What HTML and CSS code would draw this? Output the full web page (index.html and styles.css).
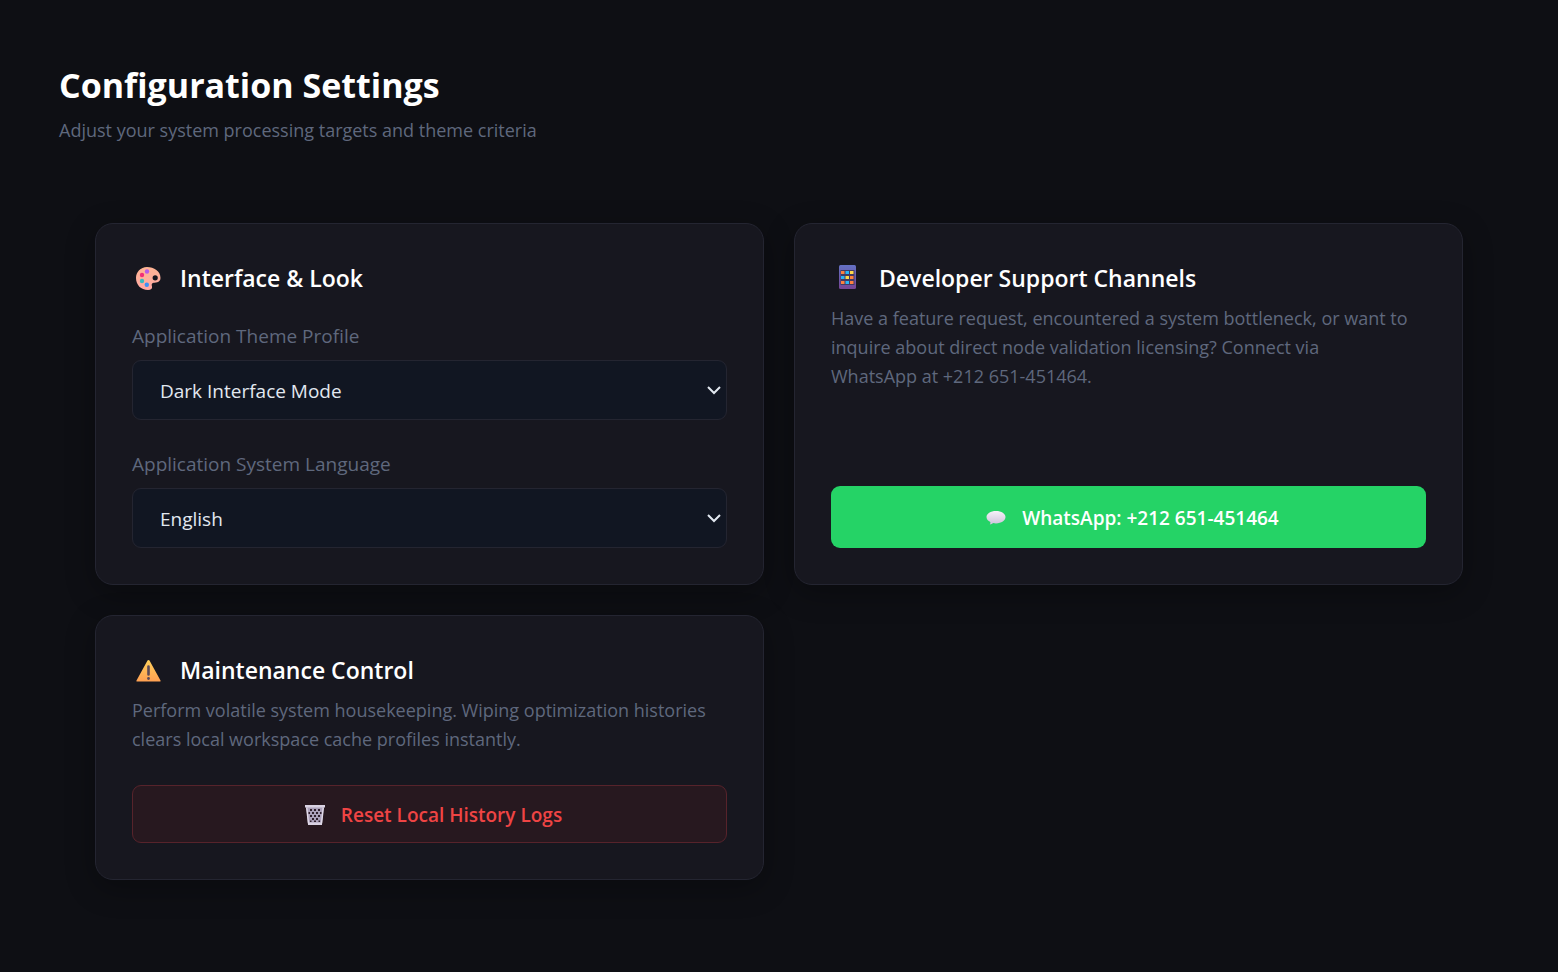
FILE: index.html
```html
<!DOCTYPE html>
<html lang="en">
<head>
    <meta charset="UTF-8">
    <meta name="viewport" content="width=device-width, initial-scale=1.0">
    <title>Configuration Settings</title>
    <link rel="stylesheet" href="styles.css">
</head>
<body>
    <header class="page-header">
        <h1>Configuration Settings</h1>
        <p>Adjust your system processing targets and theme criteria</p>
    </header>

    <main class="settings-grid">
        <section class="card">
            <h2 class="card-title">
                <svg class="icon" viewBox="0 0 32 32" aria-hidden="true">
                    <defs>
                        <linearGradient id="paletteFill" x1="0" y1="0" x2="0" y2="1">
                            <stop offset="0" stop-color="#ffb493"/>
                            <stop offset="1" stop-color="#ffa9a4"/>
                        </linearGradient>
                    </defs>
                    <path fill="url(#paletteFill)" fill-rule="evenodd" d="M15 5C8.500 5 4 10 4 16c0 7 5 12 12 12 3 0 4.500-1.500 4-3.500-.4-1.600-.6-3 1-3.500 1.500-.4 7.500 0 7.500-5C28.500 9 22 5 15 5zm8.200 8.200a2.600 2.600 0 1 1 0 5.200 2.600 2.600 0 0 1 0-5.200z"/>
                    <circle cx="15" cy="9.500" r="2.200" fill="#b75bea"/>
                    <circle cx="10" cy="13" r="2.200" fill="#f22f78"/>
                    <circle cx="10" cy="19" r="2.200" fill="#38bcc0"/>
                    <circle cx="14.800" cy="22.800" r="2.200" fill="#3c91f5"/>
                </svg>
                Interface &amp; Look
            </h2>
            <div class="fields">
                <div class="field">
                    <label for="theme">Application Theme Profile</label>
                    <select id="theme">
                        <option value="dark">Dark Interface Mode</option>
                        <option value="light">Light Interface Mode</option>
                    </select>
                </div>
                <div class="field">
                    <label for="language">Application System Language</label>
                    <select id="language">
                        <option value="en">English</option>
                        <option value="fr">Français</option>
                    </select>
                </div>
            </div>
        </section>

        <section class="card">
            <h2 class="card-title">
                <svg class="icon" viewBox="0 0 32 32" aria-hidden="true">
                    <defs>
                        <linearGradient id="phoneFill" x1="0" y1="0" x2="0" y2="1">
                            <stop offset="0" stop-color="#6471c4"/>
                            <stop offset="1" stop-color="#764594"/>
                        </linearGradient>
                    </defs>
                    <rect x="8" y="3" width="17" height="24" rx="1.500" fill="url(#phoneFill)"/>
                    <path fill="#423b62" d="M9.500 8h14v15h-14z"/>
                    <path fill="#ff823d" d="M10 9h3.500v3H10zM19 14h3.500v3H19zM10 19h3.500v3H10zM19 19h3.500v3H19z"/>
                    <path fill="#29b6f6" d="M14.500 9H18v3h-3.500zM10 14h3.500v3H10zM14.500 19H18v3h-3.500z"/>
                    <path fill="#ffd94a" d="M19 9h3.500v3H19zM14.500 14H18v3h-3.500z"/>
                </svg>
                Developer Support Channels
            </h2>
            <p class="card-text">Have a feature request, encountered a system bottleneck, or want to inquire about direct node validation licensing? Connect via<br>WhatsApp at +212 651-451464.</p>
            <a class="btn btn-whatsapp" href="https://wa.me/212651451464">
                <svg class="btn-icon" viewBox="2 2 20 20" aria-hidden="true">
                    <defs>
                        <linearGradient id="bubbleFill" x1="0" y1="0" x2="0" y2="1">
                            <stop offset="0" stop-color="#f5f1f8"/>
                            <stop offset="1" stop-color="#cdc2da"/>
                        </linearGradient>
                    </defs>
                    <path fill="url(#bubbleFill)" d="M12 5c5.500 0 9.500 2.600 9.500 6.100s-4 6.300-9.500 6.300c-1 0-2-.1-2.900-.3-.8.900-2 1.400-3.300 1.500.5-.7.700-1.600.6-2.500-2.400-1.100-3.900-2.900-3.900-5C2.500 7.600 6.500 5 12 5z"/>
                </svg>
                WhatsApp: +212 651-451464
            </a>
        </section>

        <section class="card">
            <h2 class="card-title">
                <svg class="icon" viewBox="0 0 32 32" aria-hidden="true">
                    <defs>
                        <linearGradient id="warnFill" x1="0" y1="0" x2="0" y2="1">
                            <stop offset="0" stop-color="#ffd05b"/>
                            <stop offset="1" stop-color="#ffa052"/>
                        </linearGradient>
                    </defs>
                    <path fill="url(#warnFill)" d="M16.500 6c.5 0 .8.200 1 .600l11 19.900c.3.600 0 1-.6 1H5.100c-.6 0-.9-.4-.6-1l11-19.900c.2-.4.5-.6 1-.6z"/>
                    <path fill="#5c4a57" d="M15.200 12.500a1.300 1.300 0 0 1 2.600 0v8a1.300 1.300 0 0 1-2.600 0z"/>
                    <circle cx="16.500" cy="24.500" r="1.400" fill="#5c4a57"/>
                </svg>
                Maintenance Control
            </h2>
            <p class="card-text">Perform volatile system housekeeping. Wiping optimization histories clears local workspace cache profiles instantly.</p>
            <button class="btn btn-danger" type="button">
                <svg class="btn-icon" viewBox="2 2 20 20" aria-hidden="true">
                    <path fill="#aaa0b9" d="M3.300 4h17.400l-1.900 18H5.200z"/>
                    <path fill="#d9d2e2" d="M2 2h20v2.500H2zM5 19.500h14V22H5z"/>
                    <path fill="none" stroke="#e0d9e8" stroke-width="1.500" d="M3.700 4.500l1.800 16M20.300 4.500l-1.800 16"/>
                    <path fill="#30202d" d="M7 6h2v2H7zM11 6h2v2h-2zM15 6h2v2h-2zM9 9h2v2H9zM13 9h2v2h-2zM17 9h1.500v2H17zM5.500 9H7v2H5.500zM7 12h2v2H7zM11 12h2v2h-2zM15 12h2v2h-2zM9 15h2v2H9zM13 15h2v2h-2zM7 17.500h1.500V19H7zM11 17.500h2V19h-2zM15.500 17.500H17V19h-1.500z"/>
                </svg>
                Reset Local History Logs
            </button>
        </section>
    </main>
</body>
</html>
```
FILE: styles.css
```css
* {
    box-sizing: border-box;
}
body {
    font-family: 'Segoe UI', 'Open Sans', sans-serif;
    background-color: #0e0f14;
    margin: 0;
    padding: 60px 59px;
    font-size: 19px;
    line-height: 29px;
    color: #e2e8f0;
}
h1, h2, p {
    margin: 0;
}
.page-header h1 {
    color: #fff;
    font-size: 34px;
    font-weight: 700;
    line-height: 50px;
}
.page-header p {
    margin-top: 6px;
    color: #5f687d;
    font-size: 18px;
}
.settings-grid {
    display: grid;
    grid-template-columns: repeat(2, 1fr);
    gap: 30px;
    padding: 78px 36px 32px;
}
.card {
    display: flex;
    flex-direction: column;
    padding: 36px;
    background-color: #17171f;
    border: 1px solid #242531;
    border-radius: 18px;
    box-shadow: 0 8px 30px rgba(0, 0, 0, 0.3);
}
.card-title {
    display: flex;
    align-items: center;
    gap: 16px;
    color: #fff;
    font-size: 23px;
    font-weight: 600;
    line-height: 36px;
}
.icon {
    width: 32px;
    height: 32px;
}
.fields {
    display: flex;
    flex-direction: column;
    gap: 30px;
    margin-top: 26px;
}
.field {
    display: flex;
    flex-direction: column;
    gap: 9px;
}
.field label,
.card-text {
    color: #5f687d;
}
.card-text {
    margin-top: 8px;
    margin-bottom: 31px;
    font-size: 18px;
    line-height: 29px;
}
select {
    appearance: none;
    width: 100%;
    height: 60px;
    padding: 2px 27px 0;
    background: #111622 url("data:image/svg+xml,%3Csvg xmlns='http://www.w3.org/2000/svg' width='14' height='9' fill='none' stroke='%23e2e8f0' stroke-width='2'%3E%3Cpath d='M1 1l6 6 6-6'/%3E%3C/svg%3E") no-repeat right 5px center;
    color: #e2e8f0;
    border: 1px solid #242531;
    border-radius: 9px;
    font-family: inherit;
    font-size: 19px;
}
.btn {
    display: flex;
    align-items: center;
    justify-content: center;
    gap: 16px;
    margin-top: auto;
    padding: 2px 0 0 8px;
    border-radius: 9px;
    font-family: inherit;
    font-size: 19px;
    font-weight: 600;
    text-decoration: none;
    cursor: pointer;
}
.btn-icon {
    width: 20px;
    height: 20px;
}
.btn-whatsapp {
    height: 62px;
    background-color: #25d366;
    color: #fff;
}
.btn-danger {
    height: 58px;
    background-color: #27181f;
    color: #ef4444;
    border: 1px solid #57232b;
}
```
